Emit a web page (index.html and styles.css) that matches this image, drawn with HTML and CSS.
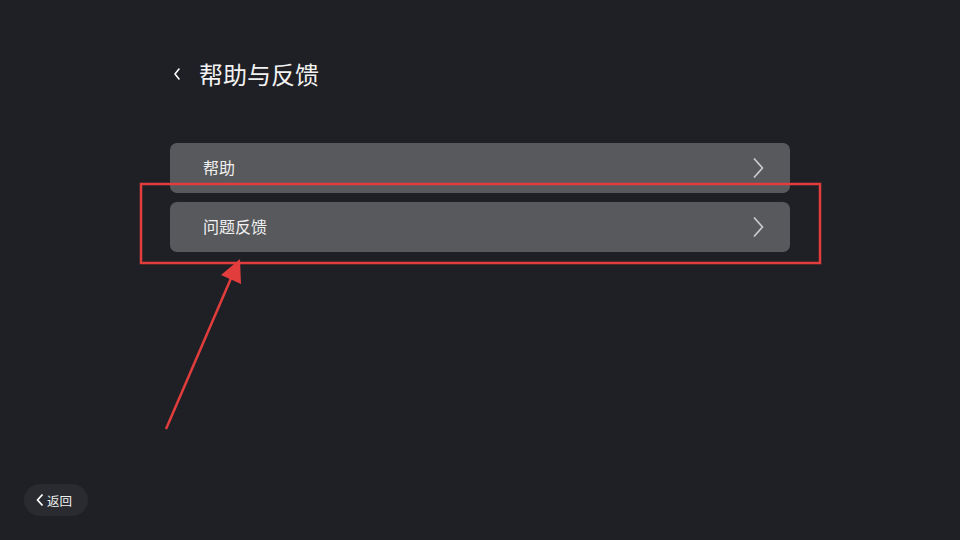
FILE: index.html
```html
<!DOCTYPE html>
<html lang="zh">
<head>
<meta charset="utf-8">
<link rel="stylesheet" href="styles.css">
</head>
<body>
<div class="page">
  <header class="header">
    <svg class="back" width="10" height="14" viewBox="0 0 10 14"><path d="M7 2 L3 7 L7 12" fill="none" stroke="#ffffff" stroke-width="1.6" stroke-linecap="round" stroke-linejoin="round"/></svg>
    <h1 class="title">帮助与反馈</h1>
  </header>
  <ul class="list">
    <li class="item"><span class="label">帮助</span><svg class="chev" width="14" height="22" viewBox="0 0 14 22"><path d="M3 1.5 L11.5 11 L3 20.5" fill="none" stroke="#c9c9cc" stroke-width="1.8" stroke-linejoin="round"/></svg></li>
    <li class="item"><span class="label">问题反馈</span><svg class="chev" width="14" height="22" viewBox="0 0 14 22"><path d="M3 1.5 L11.5 11 L3 20.5" fill="none" stroke="#c9c9cc" stroke-width="1.8" stroke-linejoin="round"/></svg></li>
  </ul>
  <button class="back-btn"><svg width="10" height="14" viewBox="0 0 10 14"><path d="M7.5 1.5 L2.5 7 L7.5 12.5" fill="none" stroke="#ffffff" stroke-width="1.8" stroke-linejoin="round"/></svg><span>返回</span></button>
</div>
<svg class="annot" width="960" height="540" viewBox="0 0 960 540">
  <rect x="141" y="184" width="679" height="79" fill="none" stroke="#e23d3d" stroke-width="2.5"/>
  <line x1="166" y1="429" x2="232" y2="276" stroke="#e23d3d" stroke-width="2.5"/>
  <polygon points="240,259 221,275 241,284" fill="#e23d3d"/>
</svg>
</body>
</html>
```
FILE: styles.css
```css
* { box-sizing: border-box; }
html, body { margin: 0; padding: 0; }
body {
  width: 960px;
  height: 540px;
  background: #1f2025;
  font-family: "Noto Sans CJK SC", "Noto Sans", sans-serif;
  color: #ffffff;
  overflow: hidden;
  position: relative;
}
.page {
  height: 540px;
  display: flex;
  flex-direction: column;
  padding: 56px 170px 0 170px;
  position: relative;
}
.header {
  display: flex;
  align-items: center;
  height: 36px;
  gap: 17px;
}
.back { margin-left: 2px; }
.title {
  margin: 0;
  font-size: 24px;
  font-weight: 400;
  line-height: 36px;
  color: #f2f2f2;
}
.list {
  list-style: none;
  margin: 51px 0 0 0;
  padding: 0;
  display: flex;
  flex-direction: column;
  gap: 9px;
}
.item {
  height: 50px;
  background: #58595d;
  border-radius: 7px;
  display: flex;
  align-items: center;
  justify-content: space-between;
  padding: 0 25px 0 33px;
  font-size: 16px;
  color: #f0f0f0;
}
.label {
  line-height: 20px;
  margin-top: -2px;
}
.back-btn {
  position: absolute;
  left: 24px;
  top: 484px;
  width: 64px;
  height: 32px;
  border: 0;
  border-radius: 16px;
  background: #2a2b30;
  color: #f0f0f0;
  font-family: inherit;
  font-size: 12.5px;
  display: flex;
  align-items: center;
  padding: 0 0 0 11px;
  gap: 2px;
}
.annot {
  position: absolute;
  left: 0;
  top: 0;
  pointer-events: none;
}
```
